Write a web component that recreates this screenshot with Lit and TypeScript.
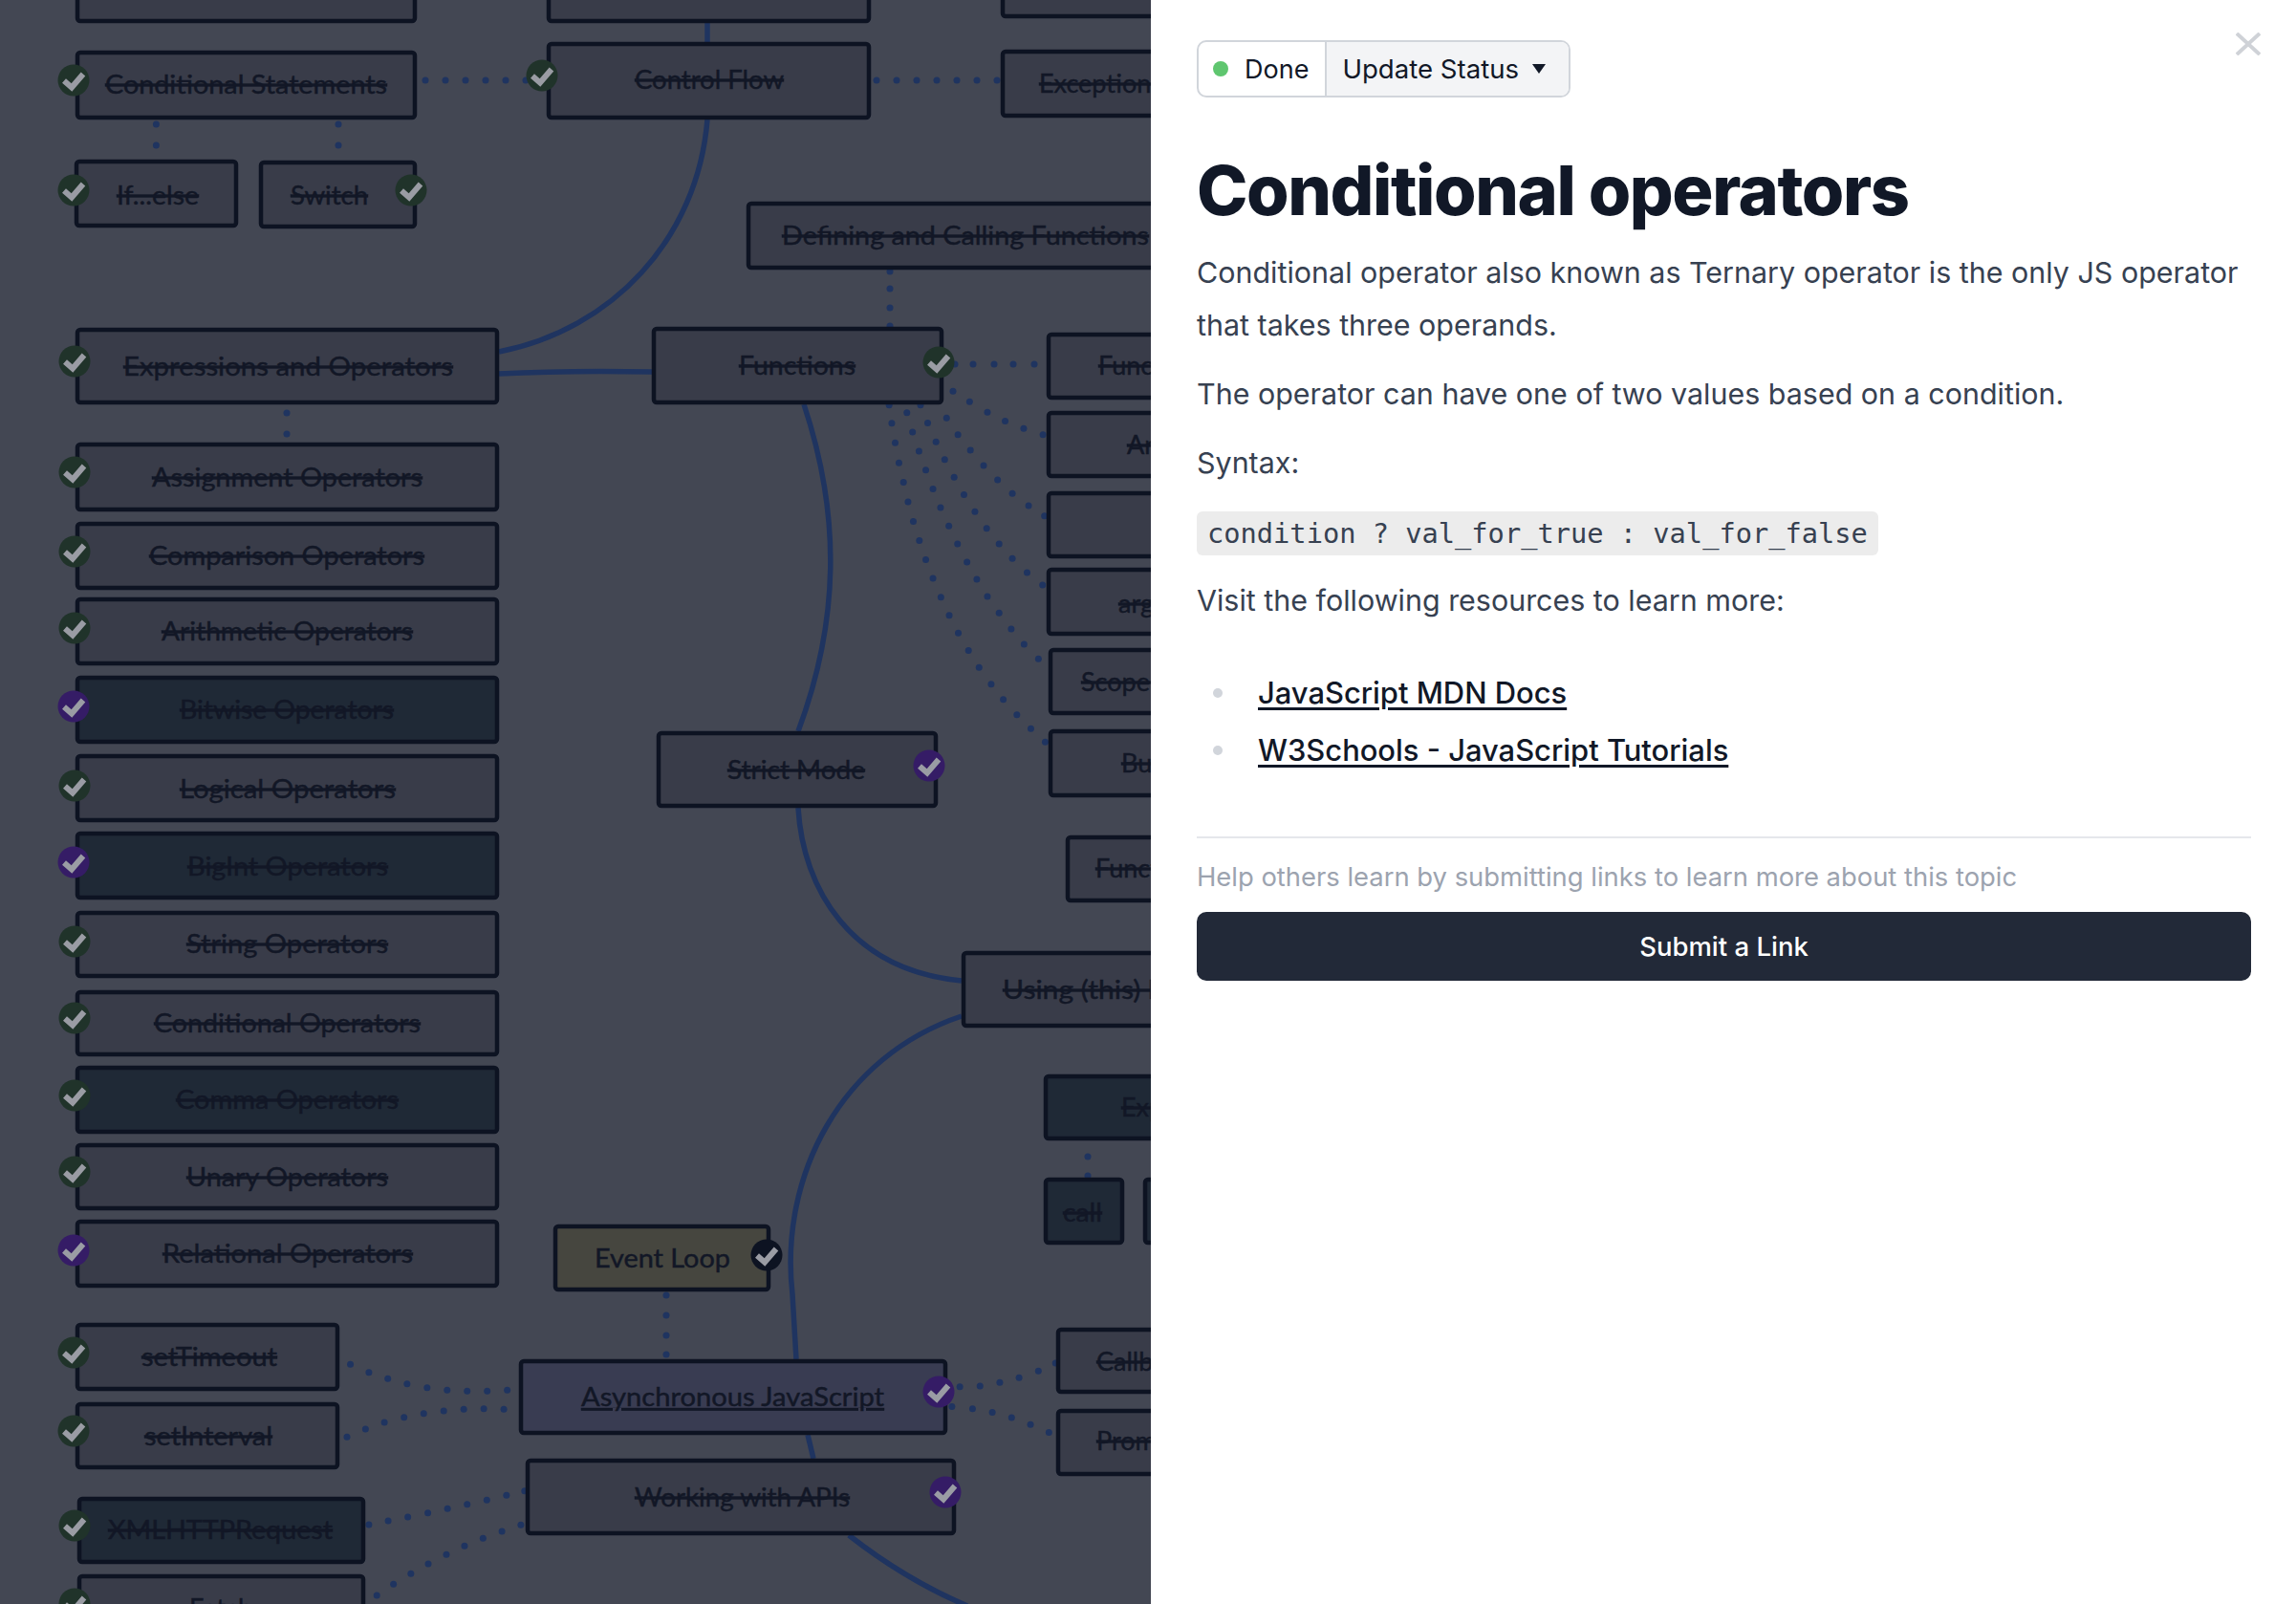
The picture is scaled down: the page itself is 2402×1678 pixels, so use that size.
import { LitElement, html, css, svg } from "lit";
import { customElement } from "lit/decorators.js";

type Node = { x: number; y: number; x2: number; y2: number; t?: string; tx?: number; tw?: number; cy?: number; kind?: string; style?: string };
type Badge = [number, number, "g" | "p" | "d"];
type P = [number, number];

const R = 1300; // boxes clipped by the panel run to here

const nodes: Node[] = [
  { x: 79, y: -40, x2: 436, y2: 24 },
  { x: 572, y: -40, x2: 911, y2: 24 },
  { x: 1047, y: -40, x2: R, y2: 19 },
  { x: 79, y: 53, x2: 436, y2: 125, t: "Conditional Statements", tx: 110, tw: 295, cy: 89 },
  { x: 572, y: 44, x2: 911, y2: 125, t: "Control Flow", tx: 664, tw: 156, cy: 84 },
  { x: 1047, y: 52, x2: R, y2: 123, t: "Exception Handling", tx: 1087, cy: 88 },
  { x: 78, y: 167, x2: 249, y2: 238, t: "If...else", tx: 122, tw: 86, cy: 205 },
  { x: 271, y: 168, x2: 436, y2: 239, t: "Switch", tx: 304, tw: 81, cy: 205 },
  { x: 781, y: 211, x2: R, y2: 282, t: "Defining and Calling Functions", tx: 818, tw: 384, cy: 247 },
  { x: 79, y: 343, x2: 522, y2: 423, t: "Expressions and Operators", tx: 129, tw: 345, cy: 384 },
  { x: 682, y: 342, x2: 987, y2: 423, t: "Functions", tx: 773, tw: 122, cy: 383 },
  { x: 1095, y: 348, x2: R, y2: 418, t: "Function Parameters", tx: 1149, cy: 383 },
  { x: 1095, y: 430, x2: R, y2: 500, t: "Arrow Functions", tx: 1179, cy: 466 },
  { x: 1095, y: 514, x2: R, y2: 584 },
  { x: 1095, y: 594, x2: R, y2: 665, t: "arguments object", tx: 1170, cy: 632 },
  { x: 1097, y: 678, x2: R, y2: 748, t: "Scope & Function Stack", tx: 1131, cy: 714 },
  { x: 1097, y: 763, x2: R, y2: 834, t: "Built-in Functions", tx: 1173, cy: 799 },
  { x: 1115, y: 874, x2: R, y2: 944, t: "Function Borrowing", tx: 1146, cy: 909 },
  { x: 79, y: 463, x2: 522, y2: 535, t: "Assignment Operators", tx: 159, tw: 283, cy: 500 },
  { x: 79, y: 546, x2: 522, y2: 617, t: "Comparison Operators", tx: 156, tw: 288, cy: 582 },
  { x: 79, y: 625, x2: 522, y2: 696, t: "Arithmetic Operators", tx: 169, tw: 263, cy: 661 },
  { x: 79, y: 707, x2: 522, y2: 778, t: "Bitwise Operators", tx: 188, tw: 224, cy: 743, kind: "dark" },
  { x: 79, y: 789, x2: 522, y2: 860, t: "Logical Operators", tx: 188, tw: 226, cy: 826 },
  { x: 79, y: 870, x2: 522, y2: 941, t: "BigInt Operators", tx: 196, tw: 210, cy: 907, kind: "dark" },
  { x: 79, y: 953, x2: 522, y2: 1023, t: "String Operators", tx: 195, tw: 211, cy: 988 },
  { x: 79, y: 1036, x2: 522, y2: 1105, t: "Conditional Operators", tx: 161, tw: 279, cy: 1071 },
  { x: 79, y: 1115, x2: 522, y2: 1186, t: "Comma Operators", tx: 184, tw: 233, cy: 1151, kind: "dark" },
  { x: 79, y: 1196, x2: 522, y2: 1266, t: "Unary Operators", tx: 195, tw: 211, cy: 1232 },
  { x: 79, y: 1276, x2: 522, y2: 1347, t: "Relational Operators", tx: 170, tw: 262, cy: 1312 },
  { x: 687, y: 765, x2: 981, y2: 845, t: "Strict Mode", tx: 761, tw: 144, cy: 806 },
  { x: 1006, y: 995, x2: R, y2: 1075, t: "Using (this) keyword", tx: 1049, tw: 265, cy: 1036 },
  { x: 1092, y: 1124, x2: R, y2: 1193, t: "Explicit Binding", tx: 1173, cy: 1159, kind: "dark" },
  { x: 1092, y: 1232, x2: 1176, y2: 1302, t: "call", tx: 1112, tw: 41, cy: 1269, kind: "dark" },
  { x: 1196, y: 1232, x2: R, y2: 1302, kind: "dark" },
  { x: 579, y: 1281, x2: 806, y2: 1351, t: "Event Loop", tx: 622, tw: 142, cy: 1317, kind: "olive", style: "plain" },
  { x: 79, y: 1384, x2: 355, y2: 1455, t: "setTimeout", tx: 148, tw: 142, cy: 1420 },
  { x: 79, y: 1467, x2: 355, y2: 1537, t: "setInterval", tx: 151, tw: 134, cy: 1503 },
  { x: 543, y: 1422, x2: 991, y2: 1501, t: "Asynchronous JavaScript", tx: 608, tw: 317, cy: 1462, kind: "blue", style: "link" },
  { x: 550, y: 1526, x2: 1000, y2: 1606, t: "Working with APIs", tx: 664, tw: 225, cy: 1567 },
  { x: 1105, y: 1389, x2: R, y2: 1458, t: "Callbacks", tx: 1147, cy: 1425 },
  { x: 1105, y: 1474, x2: R, y2: 1544, t: "Promises", tx: 1147, cy: 1508 },
  { x: 81, y: 1566, x2: 382, y2: 1636, t: "XMLHTTPRequest", tx: 113, tw: 235, cy: 1601, kind: "dark" },
  { x: 81, y: 1647, x2: 382, y2: 1720, t: "Fetch", tx: 198, tw: 66, cy: 1683 },
];

const badges: Badge[] = [
  [77, 84, "g"], [567, 79, "g"], [77, 199, "g"], [430, 199, "g"], [78, 378, "g"], [982, 379, "g"],
  [78, 494, "g"], [78, 577, "g"], [78, 657, "g"], [77, 739, "p"], [78, 822, "g"], [77, 902, "p"],
  [78, 985, "g"], [78, 1065, "g"], [78, 1146, "g"], [78, 1226, "g"], [77, 1308, "p"],
  [972, 801, "p"], [802, 1313, "d"], [982, 1456, "p"], [989, 1561, "p"],
  [77, 1415, "g"], [77, 1497, "g"], [78, 1596, "g"], [78, 1678, "g"],
];

const curves = [
  "M740 24 L740 44",
  "M740 125 C730 250 640 345 522 368",
  "M522 391 C580 388 630 388 682 389",
  "M841 423 C880 540 878 650 835 765",
  "M835 845 C840 930 890 1015 1006 1026",
  "M1006 1063 C880 1105 815 1230 829 1354 L833 1422",
  "M845 1501 L851 1526",
  "M888 1606 C925 1635 965 1660 1012 1680",
];

const z5 = (a: P[]): P[] => a.map(([x, y]) => [600 + x / 2.529, 340 + y / 2.529]);
const z6 = (a: P[]): P[] => a.map(([x, y]) => [x / 2.529, 1240 + y / 3]);
const z7 = (a: P[]): P[] => a.map(([x, y]) => [500 + x / 2.178, 960 + y / 2.184]);
const row = (xs: number[], y: number): P[] => xs.map((x) => [x, y]);
const col = (x: number, ys: number[]): P[] => ys.map((y) => [x, y]);

const dots: P[] = [
  ...col(163.4, [130, 152]),
  ...col(354, [130, 152]),
  ...col(300, [432, 454]),
  ...row([445, 466, 487, 508, 529, 550], 84),
  ...row([917, 938, 959, 980, 1001, 1022, 1043], 84),
  ...col(931, [284, 302, 322, 341]),
  ...row([999, 1018, 1040, 1060, 1082], 381),
  ...col(697, [1355, 1376, 1397, 1417]),
  ...col(1138, [1210, 1230]),
  ...z5([[1004, 175], [1048, 203], [1095, 231], [1142, 254], [1191, 274], [1242, 290]]),
  ...z5([[1246, 505], [1204, 478], [1161, 446], [1122, 410], [1085, 372], [1050, 331], [1017, 290], [987, 246]]),
  ...z5([[1241, 688], [1200, 655], [1161, 618], [1126, 579], [1093, 538], [1062, 494], [1033, 449], [1007, 403], [982, 356], [959, 309], [937, 259], [918, 212]]),
  ...z5([[1230, 883], [1192, 845], [1158, 804], [1126, 762], [1095, 718], [1067, 673], [1041, 627], [1016, 579], [993, 532], [971, 483], [951, 434], [932, 384], [914, 334], [897, 283], [882, 232]]),
  ...z5([[1248, 1103], [1210, 1068], [1173, 1031], [1137, 991], [1105, 950], [1073, 906], [1045, 861], [1018, 815], [994, 768], [972, 720], [951, 670], [932, 621], [915, 570], [899, 520], [885, 468], [873, 416], [861, 365], [851, 312], [842, 260], [835, 212]]),
  ...z6([[927, 562], [976, 587], [1026, 607], [1077, 623], [1130, 635], [1183, 643], [1236, 646], [1289, 646], [1342, 643]]),
  ...z6([[918, 790], [967, 765], [1017, 744], [1069, 728], [1121, 716], [1174, 708], [1227, 703], [1280, 701], [1333, 703]]),
  ...z6([[976, 1065], [1027, 1053], [1079, 1041], [1132, 1028], [1184, 1015], [1236, 1001], [1288, 988], [1340, 973], [1388, 959]]),
  ...z6([[997, 1287], [1041, 1252], [1087, 1219], [1133, 1188], [1181, 1159], [1229, 1132], [1278, 1108], [1328, 1086], [1378, 1066]]),
  ...z7([[1098, 1072], [1144, 1070], [1189, 1062], [1233, 1051], [1277, 1036], [1316, 1018]]),
  ...z7([[1080, 1117], [1127, 1122], [1172, 1130], [1216, 1142], [1259, 1158], [1301, 1176]]),
];

@customElement("app-root")
export class AppRoot extends LitElement {
  static styles = css`
    :host { display: flex; width: 2402px; height: 1678px; overflow: hidden; background: #fff; font-family: Inter, "Liberation Sans", sans-serif; }
    .map { flex: 0 0 1204px; width: 1204px; height: 1678px; display: block; background: #434753; }
    .node { fill: #393c49; stroke: #0d1322; stroke-width: 4.5; }
    .node.dark { fill: #1f2936; }
    .node.olive { fill: #46463f; }
    .node.blue { fill: #393c52; }
    .label { font-family: Lato, "Liberation Sans", sans-serif; font-size: 27px; fill: #121726; stroke: #121726; stroke-width: 0.45; text-decoration: line-through; }
    .label.plain { text-decoration: none; }
    .label.link { text-decoration: underline; }
    .curve { fill: none; stroke: #1f3460; stroke-width: 5.5; }
    .dot { fill: #1f3460; }
    .b-g { fill: #20332a; }
    .b-p { fill: #351c66; }
    .b-d { fill: #0d1322; }
    .check { fill: none; stroke: #9a9ca4; stroke-width: 6; }
    .panel { flex: 1; position: relative; box-sizing: border-box; padding: 42px 47px 0 48px; background: #fff; color: #374151; }
    .close { position: absolute; top: 34px; right: 37px; width: 26px; height: 24px; display: block; }
    .close line { stroke: #cfd2d7; stroke-width: 4; }
    .status { display: inline-flex; height: 60px; box-sizing: border-box; border: 2px solid #d1d5db; border-radius: 10px; font-size: 27px; color: #111827; overflow: hidden; vertical-align: top; }
    .done { display: flex; align-items: center; gap: 17px; padding: 0 17px 0 15px; border-right: 2px solid #d1d5db; }
    .led { width: 16px; height: 16px; border-radius: 50%; background: #5fc66f; }
    .update { display: flex; align-items: center; gap: 14px; padding: 0 24px 0 16px; background: #f3f4f6; font-size: 27.6px; }
    .caret { width: 0; height: 0; border-left: 7px solid transparent; border-right: 7px solid transparent; border-top: 10px solid #111827; }
    h1 { margin: 37px 0 0; font-size: 72px; line-height: 119px; font-weight: 800; letter-spacing: -1.43px; color: #111827; }
    p { margin: 0 0 17px; font-size: 30.45px; line-height: 55px; }
    .code { display: block; width: fit-content; margin: 23px 0 20px; padding: 0 11px; height: 46px; line-height: 46px; border-radius: 6px; background: #ececec; font-family: "DejaVu Sans Mono", "Liberation Mono", monospace; font-size: 28.7px; }
    ul { list-style: none; margin: 42.5px 0 0; padding: 0; }
    li { position: relative; height: 60px; padding-left: 64px; font-size: 30.9px; line-height: 52px; }
    li::before { content: ""; position: absolute; left: 17px; top: 21px; width: 10px; height: 10px; border-radius: 50%; background: #d1d5db; }
    a { color: #111827; font-weight: 500; text-decoration: underline; text-underline-offset: 4px; }
    hr { border: 0; height: 2px; background: #e5e7eb; margin: 56px 0 0; }
    p.help { margin: 18px 0 0; font-size: 27.4px; line-height: 44px; color: #9ca3af; }
    .submit { display: flex; align-items: center; justify-content: center; margin-top: 15px; height: 72px; border-radius: 10px; background: #222938; color: #fff; font-size: 27.5px; font-weight: 500; }
  `;

  render() {
    return html`
      <svg class="map" viewBox="0 0 1204 1678" width="1204" height="1678">
        ${curves.map((d) => svg`<path class="curve" d=${d}></path>`)}
        ${dots.map(([x, y]) => svg`<circle class="dot" cx=${x} cy=${y} r="3.5"></circle>`)}
        ${nodes.map(
          (n) => svg`
            <rect class="node ${n.kind ?? ""}" x=${n.x + 2} y=${n.y + 2} width=${n.x2 - n.x - 4} height=${n.y2 - n.y - 4} rx="3"></rect>
            ${n.t
              ? svg`<text class="label ${n.style ?? ""}" x=${n.tx} y=${(n.cy ?? 0) + 9} textLength=${n.tw ?? ""} lengthAdjust="spacingAndGlyphs">${n.t}</text>`
              : ""}`
        )}
        ${badges.map(
          ([x, y, c]) => svg`
            <circle class="b-${c}" cx=${x} cy=${y} r="16.5"></circle>
            <path class="check" d="M${x - 10} ${y + 0.5}L${x - 2} ${y + 7.5}L${x + 10} ${y - 6.5}"></path>`
        )}
      </svg>
      <aside class="panel">
        <svg class="close" viewBox="0 0 26 24"><line x1="1" y1="1" x2="25" y2="23"></line><line x1="25" y1="1" x2="1" y2="23"></line></svg>
        <div class="status">
          <span class="done"><span class="led"></span>Done</span>
          <span class="update">Update Status<span class="caret"></span></span>
        </div>
        <h1>Conditional operators</h1>
        <p>Conditional operator also known as Ternary operator is the only JS operator that takes three operands.</p>
        <p>The operator can have one of two values based on a condition.</p>
        <p>Syntax:</p>
        <code class="code">condition ? val_for_true : val_for_false</code>
        <p>Visit the following resources to learn more:</p>
        <ul>
          <li><a href="#">JavaScript MDN Docs</a></li>
          <li><a href="#">W3Schools - JavaScript Tutorials</a></li>
        </ul>
        <hr />
        <p class="help">Help others learn by submitting links to learn more about this topic</p>
        <div class="submit">Submit a Link</div>
      </aside>
    `;
  }
}
